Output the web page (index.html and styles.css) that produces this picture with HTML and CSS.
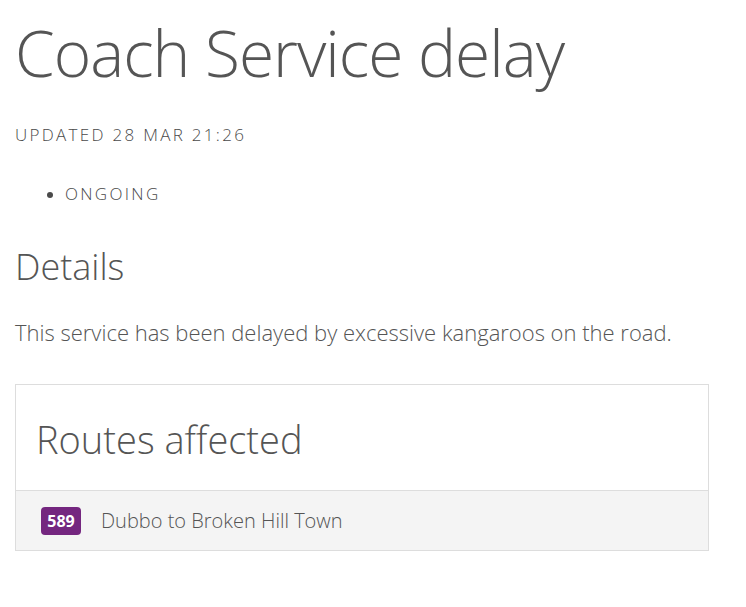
FILE: index.html
```html
<!DOCTYPE html>
<html lang="en">
<head>
<meta charset="utf-8">
<title>Coach Service delay</title>
<link rel="stylesheet" href="styles.css">
</head>
<body>
<main class="page">
  <h1 class="title">Coach Service delay</h1>
  <p class="updated">Updated 28 Mar 21:26</p>
  <ul class="status">
    <li>Ongoing</li>
  </ul>
  <h2 class="section-title">Details</h2>
  <p class="desc">This service has been delayed by excessive kangaroos on the road.</p>
  <section class="card">
    <h2 class="card-title">Routes affected</h2>
    <div class="route">
      <span class="badge">589</span>
      <span class="route-name">Dubbo to Broken Hill Town</span>
    </div>
  </section>
</main>
</body>
</html>
```

FILE: styles.css
```css
* { box-sizing: border-box; }
body {
  margin: 0;
  background: #fff;
  color: #555;
  font-family: "Open Sans", "Liberation Sans", sans-serif;
  font-weight: 300;
}
.page {
  padding: 0 37px 0 15px;
}
.title {
  margin: 0;
  padding-top: 13px;
  font-size: 64px;
  font-weight: 300;
  line-height: 80px;
  letter-spacing: -1px;
  color: #555;
}
.updated {
  margin: 31px 0 0;
  font-size: 17px;
  line-height: 22px;
  text-transform: uppercase;
  letter-spacing: 2.3px;
  font-weight: 300;
  color: #4a4a4a;
}
.status {
  margin: 37px 0 0;
  padding-left: 50px;
  font-size: 17px;
  line-height: 22px;
  text-transform: uppercase;
  letter-spacing: 2.3px;
  font-weight: 300;
  color: #4a4a4a;
}
.status li::marker {
  font-size: 16px;
}
.section-title {
  margin: 38px 0 0;
  font-size: 36px;
  font-weight: 300;
  line-height: 48px;
}
.desc {
  margin: 26px 0 0;
  font-size: 22px;
  line-height: 30px;
}
.card {
  margin-top: 37px;
  border: 1px solid #ddd;
}
.card-title {
  margin: 0;
  padding: 28px 20px 25px;
  font-size: 38px;
  font-weight: 300;
  line-height: 52px;
}
.route {
  display: flex;
  align-items: center;
  gap: 20px;
  padding: 16px 25px 15px;
  background: #f4f4f4;
  border-top: 1px solid #ddd;
}
.badge {
  display: inline-flex;
  align-items: center;
  justify-content: center;
  width: 40px;
  height: 28px;
  border-radius: 4px;
  background: #74267f;
  color: #fff;
  font-weight: 700;
  font-size: 16px;
}
.route-name {
  font-size: 20px;
  line-height: 28px;
}
```
